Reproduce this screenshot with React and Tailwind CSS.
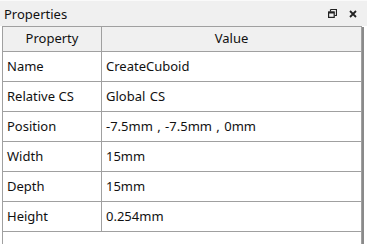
export default function App() {
  const rows = [
    ["Name", "CreateCuboid"],
    ["Relative CS", "Global CS"],
    ["Position", "-7.5mm , -7.5mm , 0mm"],
    ["Width", "15mm"],
    ["Depth", "15mm"],
    ["Height", "0.254mm"],
  ];
  return (
    <div
      className="w-[367px] h-[244px] bg-white flex flex-col overflow-hidden text-[13px] text-[#111]"
      style={{ fontFamily: '"Noto Sans", "Noto Sans CJK SC", sans-serif' }}
    >
      <div className="h-[26px] bg-[#f0f0f0] border-t border-[#fafafa] flex items-center justify-between pl-[4px] pr-[10px] shrink-0">
        <span className="leading-none pt-[1px]">Properties</span>
        <div className="flex items-center gap-[12px]">
          <svg width="9" height="9" viewBox="0 0 9 9" className="text-[#222]">
            <path d="M2.5 0.5h6v6h-2" fill="none" stroke="currentColor" strokeWidth="1.2" />
            <path d="M2.5 0.5v2" fill="none" stroke="currentColor" strokeWidth="1.2" />
            <rect x="0.6" y="3" width="5.6" height="5.4" fill="none" stroke="currentColor" strokeWidth="1.2" />
            <path d="M0.6 3.6h5.6" stroke="currentColor" strokeWidth="1.8" />
          </svg>
          <svg width="8" height="8" viewBox="0 0 8 8" className="text-[#222]">
            <path d="M1 1L7 7M7 1L1 7" stroke="currentColor" strokeWidth="1.8" />
          </svg>
        </div>
      </div>
      <div className="flex-1 flex pl-[2px]">
        <div className="w-[360px] border-l border-r border-[#a0a0a0] flex flex-col">
          <div className="h-[26px] bg-[#f0f0f0] border-t border-b border-[#a0a0a0] flex shrink-0">
            <div className="w-[99px] border-r border-[#a0a0a0] flex items-center justify-center">Property</div>
            <div className="flex-1 flex items-center justify-center">Value</div>
          </div>
          {rows.map(([k, v]) => (
            <div key={k} className="h-[30px] border-b border-[#a0a0a0] flex shrink-0">
              <div className="w-[99px] border-r border-[#a0a0a0] flex items-center pl-[4px] pt-[1px]">{k}</div>
              <div className="flex-1 flex items-center pl-[4px] pt-[1px] [word-spacing:1px]">{v}</div>
            </div>
          ))}
        </div>
        <div className="w-[2px] bg-[#8a8a8a] mt-[1px]"></div>
      </div>
    </div>
  );
}
